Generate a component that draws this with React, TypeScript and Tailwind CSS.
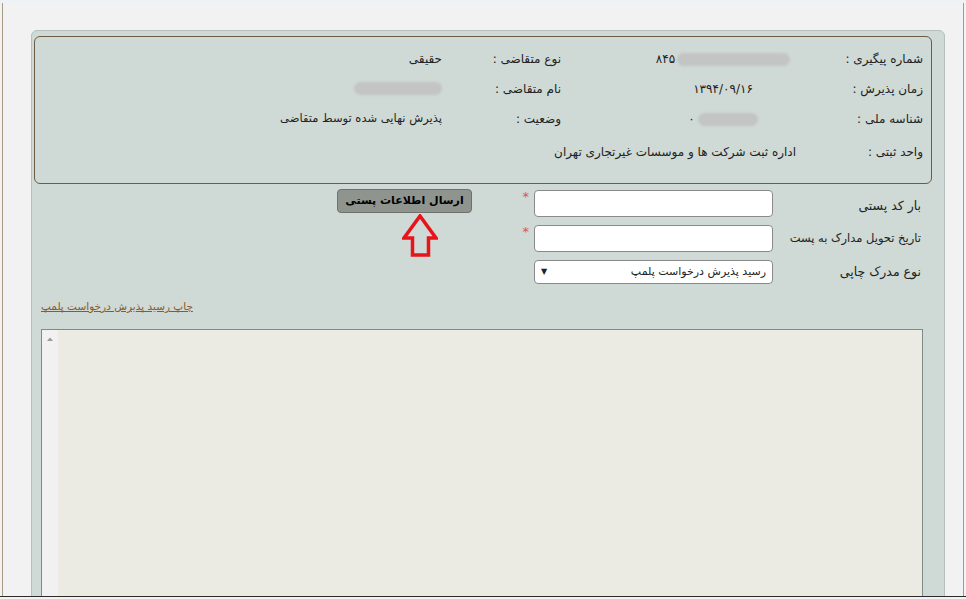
import React from 'react';

const Blob: React.FC<{ w: number }> = ({ w }) => (
  <span
    className="inline-block h-[13px] rounded-full bg-[#c3c5c4] blur-[1px]"
    style={{ width: w }}
  />
);

export default function App() {
  return (
    <div className="h-[599px] w-[966px] overflow-hidden bg-[#f2f2f2] font-['DejaVu_Sans',sans-serif] text-[#222]">
      <div className="h-[3px] bg-[#eef2f5]" />
      <div dir="rtl" className="ml-[2px] mr-[2px] h-[593px] overflow-hidden border-x border-x-[#a89a84] pl-[28px] pr-[18px] pt-[27px]">
        {/* main panel */}
        <div className="h-[600px] rounded-t-[6px] border border-[#b4c0bb] bg-[#cfd9d5] pt-[5px]">
          {/* info box */}
          <div className="ml-[2px] mr-[12px] h-[148px] rounded-[6px] border border-[#6e5b45] pt-[7px] text-[12px]">
            <div className="grid grid-cols-[118px_232px_120px_1fr] grid-rows-[30px_29px_32px_34px] items-center">
              <div className="pr-[8px]">شماره پیگیری :</div>
              <div className="flex justify-center pl-[52px]">
                <span dir="ltr" className="inline-flex items-center gap-[2px]">
                  <span>۸۴۵</span>
                  <Blob w={113} />
                </span>
              </div>
              <div className="pr-[20px]">نوع متقاضی :</div>
              <div className="pr-[19px]">حقیقی</div>

              <div className="pr-[8px]">زمان پذیرش :</div>
              <div className="flex justify-center pl-[52px]">
                <span>۱۳۹۴/۰۹/۱۶</span>
              </div>
              <div className="pr-[20px]">نام متقاضی :</div>
              <div className="flex pr-[19px]">
                <Blob w={88} />
              </div>

              <div className="pr-[8px]">شناسه ملی :</div>
              <div className="flex justify-center pl-[52px]">
                <span dir="ltr" className="inline-flex items-center gap-[3px]">
                  <span>۰</span>
                  <Blob w={60} />
                </span>
              </div>
              <div className="pr-[20px]">وضعیت :</div>
              <div className="pr-[19px] text-[11.5px]">پذیرش نهایی شده توسط متقاضی</div>

              <div className="pr-[8px]">واحد ثبتی :</div>
              <div className="col-span-3 pr-[17px]">اداره ثبت شرکت ها و موسسات غیرتجاری تهران</div>
            </div>
          </div>

          {/* form */}
          <div className="flex items-start">
            <div className="mt-[6px] grid grid-cols-[148px_239px_16px] items-center gap-y-[8px] pr-[23px] text-[12.5px]">
              <div className="whitespace-nowrap pt-[6px]">بار کد پستی</div>
              <div className="h-[27px] rounded-[4px] border border-[#8a8a8a] bg-white" />
              <div className="self-start pr-[5px] text-[13px] leading-[14px] text-[#e0524f]">*</div>

              <div className="whitespace-nowrap text-[11.5px]">تاریخ تحویل مدارک به پست</div>
              <div className="h-[27px] rounded-[4px] border border-[#8a8a8a] bg-white" />
              <div className="self-start pr-[5px] text-[13px] leading-[14px] text-[#e0524f]">*</div>

              <div className="whitespace-nowrap">نوع مدرک چاپی</div>
              <div className="flex h-[24px] items-center justify-between rounded-[4px] border border-[#8a8a8a] bg-white pl-[6px] pr-[6px]">
                <span className="text-[11px]">رسید پذیرش درخواست پلمپ</span>
                <span className="text-[8px]">▼</span>
              </div>
              <div />
            </div>

            <div className="mr-[46px] mt-[5px] flex flex-col items-start">
              <button className="h-[24px] w-[135px] rounded-[4px] border border-[#6d726d] bg-[#8f948f] text-[11px] font-bold text-black">
                ارسال اطلاعات پستی
              </button>
              <svg width="36" height="44" viewBox="0 0 36 44" className="mr-[34px] mt-[1px]">
                <path
                  d="M18 2 L34 24 L26.5 24 L26.5 41 L10.5 41 L10.5 24 L2 24 Z"
                  fill="none"
                  stroke="#e8141b"
                  strokeWidth="3.5"
                  strokeLinejoin="miter"
                />
              </svg>
            </div>
          </div>

          {/* print link */}
          <div className="mt-[14px] flex h-[16px] justify-end pl-[9px] text-[10.5px] leading-[16px]">
            <span className="cursor-pointer text-[#8b5a2b] underline">چاپ رسید پذیرش درخواست پلمپ</span>
          </div>

          {/* textarea */}
          <div className="ml-[9px] mr-[21px] mt-[15px] flex h-[300px] border border-[#7f8b86] bg-[#ebeae3]">
            <div className="flex-1" />
            <div className="w-[16px] bg-[#f1f1f1] pt-[6px]">
              <svg width="16" height="6" viewBox="0 0 16 6">
                <path d="M5 5 L8 1.5 L11 5 Z" fill="#9a9a9a" />
              </svg>
            </div>
          </div>
        </div>
      </div>
      <div className="h-px bg-[#2a2a2a]" />
    </div>
  );
}
